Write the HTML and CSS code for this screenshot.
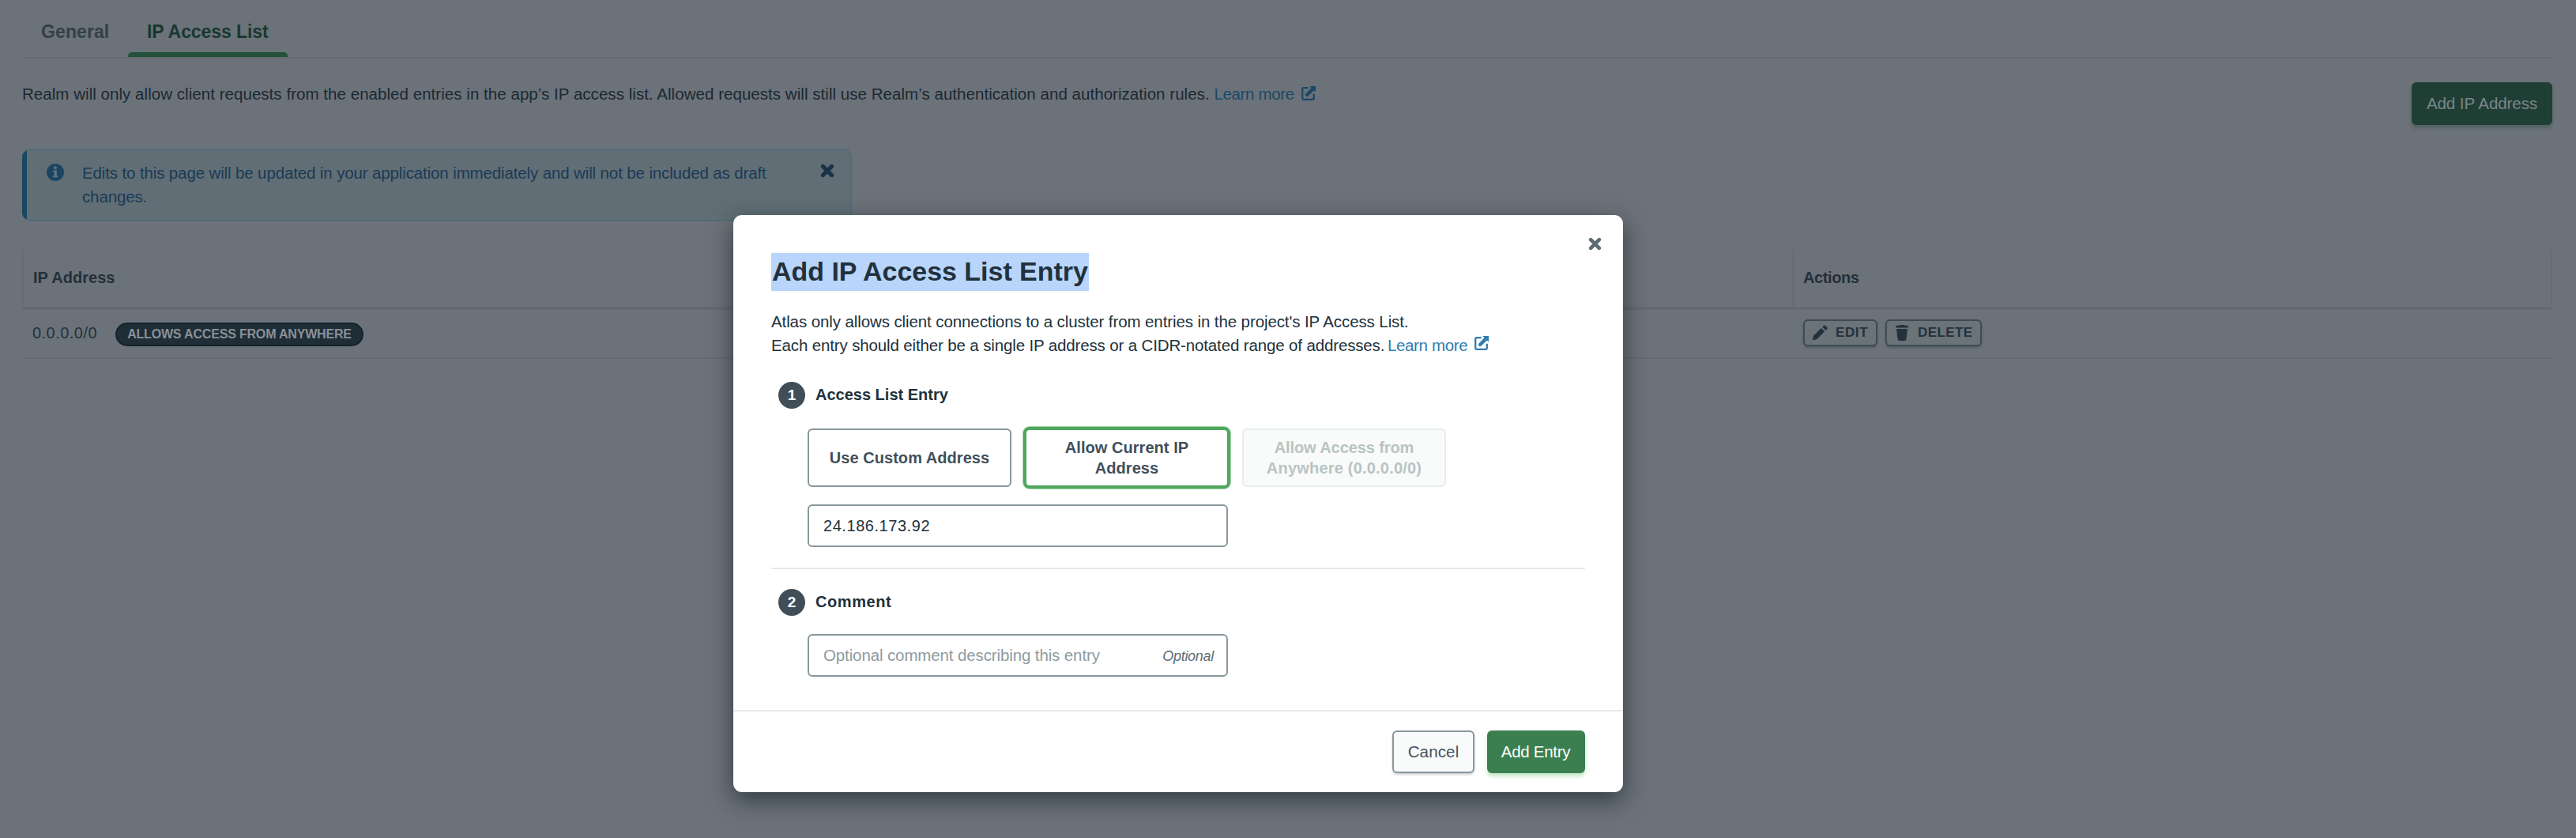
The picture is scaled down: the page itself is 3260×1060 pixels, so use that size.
FILE: index.html
```html
<!DOCTYPE html>
<html lang="en">
<head>
<meta charset="utf-8">
<title>IP Access List</title>
<link rel="stylesheet" href="styles.css">
</head>
<body>
<svg class="defs" width="0" height="0" aria-hidden="true">
  <symbol id="icon-external" viewBox="0 0 18 18">
    <path d="M8.500 2.200H2.700a1.500 1.500 0 0 0-1.500 1.500v11.600a1.500 1.500 0 0 0 1.500 1.500h11.600a1.500 1.500 0 0 0 1.500-1.500V9.800" fill="none" stroke="currentColor" stroke-width="2.300"/>
    <path d="M10.300 0H18v7.600l-2.200-2.100-7.300 7a2.100 2.100 0 0 1-3-3l7-7.300z" fill="currentColor"/>
  </symbol>
  <symbol id="icon-x" viewBox="0 0 16 16">
    <path d="M3 3l10 10M13 3L3 13" fill="none" stroke="currentColor" stroke-width="4.400" stroke-linecap="round"/>
  </symbol>
</svg>

<main class="page">
  <nav class="tabs">
    <a class="tab tab-general">General</a>
    <a class="tab tab-active">IP Access List</a>
  </nav>

  <section class="intro">
    <p class="intro-text"><span class="intro-copy">Realm will only allow client requests from the enabled entries in the app’s IP access list. Allowed requests will still use Realm’s authentication and authorization rules.</span><a class="link">Learn more<svg class="external"><use href="#icon-external"/></svg></a></p>
    <button class="add-address">Add IP Address</button>
  </section>

  <aside class="banner">
    <svg class="banner-icon" viewBox="0 0 22 22">
      <circle cx="11" cy="11" r="11" fill="#1b4662"/>
      <circle cx="11" cy="5.2" r="2" fill="#61727b"/>
      <path d="M8 8.6h4.8v6.6H14v2H8v-2h1.5v-4.6H8z" fill="#61727b"/>
    </svg>
    <p class="banner-text">Edits to this page will be updated in your application immediately and will not be included as draft<br>changes.</p>
    <svg class="banner-close"><use href="#icon-x"/></svg>
  </aside>

  <section class="table">
    <div class="table-head">
      <div class="th">IP Address</div>
      <div class="th th-actions">Actions</div>
    </div>
    <div class="table-row">
      <div class="td">
        <span class="cidr">0.0.0.0/0</span>
        <span class="badge">ALLOWS ACCESS FROM ANYWHERE</span>
      </div>
      <div class="td td-actions">
        <button class="mini edit">
          <svg class="mini-icon" viewBox="0 0 20 20"><path d="M.8 19.4l1.2-5.6L11.900 3.900l4.300 4.300L6.300 18.100zM13.200 2.600l1.700-1.700a1.500 1.500 0 0 1 2.100 0l2.200 2.200a1.500 1.500 0 0 1 0 2.100l-1.700 1.700z" fill="currentColor"/></svg>EDIT</button>
        <button class="mini delete">
          <svg class="mini-icon" viewBox="0 0 20 20"><path d="M6.500.8Q6.700 0 7.600 0h4.800q.9 0 1.100.8h2.900Q18 .8 18 2.400v1.200H2V2.400Q2 .8 3.600.8zM3 5h14l-1.500 12.700Q15.200 20 13.200 20H6.800Q4.800 20 4.500 17.700z" fill="currentColor"/></svg>DELETE</button>
      </div>
    </div>
  </section>
</main>

<div class="modal" role="dialog">
  <svg class="modal-close"><use href="#icon-x"/></svg>
  <div class="modal-body">
    <h1 class="modal-title"><span class="selected">Add IP Access List Entry</span></h1>
    <p class="modal-text"><span class="line-one">Atlas only allows client connections to a cluster from entries in the project's IP Access List.</span><span class="line-two">Each entry should either be a single IP address or a CIDR-notated range of addresses.</span><a class="link link-bright">Learn more<svg class="external"><use href="#icon-external"/></svg></a></p>

    <section class="step">
      <h2 class="step-head"><span class="step-number">1</span><span class="step-title">Access List Entry</span></h2>
      <div class="step-fields">
        <div class="options">
          <button class="option">Use Custom Address</button>
          <button class="option option-selected">Allow Current IP<br>Address</button>
          <button class="option option-disabled" disabled>Allow Access from<br><span class="anywhere">Anywhere (0.0.0.0/0)</span></button>
        </div>
        <div class="field address-field"><span class="value">24.186.173.92</span></div>
      </div>
    </section>

    <section class="step step-comment">
      <h2 class="step-head"><span class="step-number">2</span><span class="step-title comment-title">Comment</span></h2>
      <div class="step-fields">
        <div class="field comment-field"><span class="placeholder">Optional comment describing this entry</span><span class="optional">Optional</span></div>
      </div>
    </section>
  </div>
  <footer class="modal-footer">
    <button class="cancel">Cancel</button>
    <button class="submit">Add Entry</button>
  </footer>
</div>
</body>
</html>
```
FILE: styles.css
```css
* { box-sizing: border-box; }

html, body { height: 100%; overflow: hidden; }

body {
  margin: 0;
  background: #6c7279;
  color: #1a2933;
  font-family: "Liberation Sans", Arial, sans-serif;
  font-size: 20.5px;
  line-height: 30px;
}

h1, h2, p { margin: 0; }

button {
  display: flex;
  align-items: center;
  justify-content: center;
  padding: 0;
  font: inherit;
  white-space: nowrap;
}

svg { display: block; flex: none; }
.defs { position: absolute; }

.page { padding: 0 30px 0 28px; }

/* Tabs */
.tabs {
  display: flex;
  height: 74px;
  border-bottom: 2px solid #646a71;
  font-size: 23px;
  font-weight: bold;
}
.tab { height: 72px; padding-top: 25px; padding-left: 24px; color: #33404b; white-space: nowrap; }
.tab-general { width: 134px; letter-spacing: 0.1px; }
.tab-active {
  display: flex;
  flex-direction: column;
  justify-content: space-between;
  width: 202px;
  color: #18382f;
  letter-spacing: -0.08px;
}
.tab-active::after {
  content: "";
  height: 6px;
  margin-left: -24px;
  background: #245139;
  border-radius: 5px 5px 0 0;
}

/* Intro */
.intro { display: flex; justify-content: space-between; padding-top: 30px; }
.intro-text { display: flex; white-space: nowrap; }
.intro-copy { width: 1508.5px; letter-spacing: 0.045px; }
.link { display: flex; color: #1b4865; letter-spacing: -0.36px; }
.link-bright { color: #2f7dae; }
.external { width: 18px; height: 18px; margin: 5px 0 0 9px; }
.add-address {
  width: 178px;
  height: 54px;
  border: 0;
  border-radius: 6px;
  background: #1f3f35;
  color: #7c8589;
  letter-spacing: -0.05px;
  box-shadow: 0 4px 4px rgba(45, 82, 68, 0.45);
}

/* Info banner */
.banner {
  display: flex;
  width: 1050px;
  height: 92px;
  margin-top: 30px;
  border: 2px solid #566b79;
  border-left: 0;
  border-radius: 10px;
  background: linear-gradient(90deg, #1b4662 6px, #616e75 6px);
  color: #1a3a56;
  letter-spacing: -0.13px;
}
.banner-icon { width: 22px; height: 22px; margin: 17px 0 0 31px; }
.banner-text { flex: 1; padding: 14px 0 0 23px; white-space: nowrap; }
.banner-close { width: 18px; height: 18px; margin: 17px 20px 0 0; color: #183248; }

/* Table */
.table { margin-top: 36px; }
.table-head, .table-row { display: grid; grid-template-columns: 2240px 1fr; }
.table-head {
  height: 76px;
  border-bottom: 4px solid #646a71;
  border-right: 2px solid #666c73;
  color: #22303b;
  font-size: 20px;
  font-weight: bold;
  line-height: 70px;
}
.th { padding-left: 12px; border-left: 2px solid #666c73; }
.th-actions { letter-spacing: -0.4px; }
.table-row { height: 62px; margin-left: 2px; border-bottom: 2px solid #646a71; }
.td { display: flex; align-items: flex-start; }
.cidr { width: 116px; padding-left: 11px; font-size: 20px; line-height: 58px; letter-spacing: 0.47px; color: #23323d; }
.badge {
  width: 314px;
  height: 30px;
  margin-top: 16px;
  border: 2px solid #14222d;
  border-radius: 15px;
  background: #1f2d37;
  color: #8a9197;
  font-size: 16px;
  font-weight: bold;
  line-height: 26px;
  letter-spacing: -0.18px;
  text-align: center;
  white-space: nowrap;
}
.td-actions { gap: 10px; padding: 12px 0 0 12px; }
.mini {
  height: 34px;
  justify-content: flex-start;
  padding-left: 9px;
  border: 2px solid #3d4b55;
  border-radius: 6px;
  background: #6a7378;
  color: #23313c;
  font-size: 17px;
  font-weight: bold;
  box-shadow: 0 2px 3px rgba(30, 42, 52, 0.35);
}
.mini-icon { width: 20px; height: 20px; margin-right: 10px; }
.edit { width: 94px; letter-spacing: 0.6px; }
.delete { width: 122px; letter-spacing: 0.4px; }

/* Dialog */
.modal {
  position: absolute;
  left: 928px;
  top: 272px;
  width: 1126px;
  height: 730px;
  border-radius: 11px;
  background: #fff;
  color: #21313c;
  box-shadow: 0 10px 30px rgba(6, 22, 33, 0.6);
}
.modal-close { position: absolute; top: 28px; right: 27px; width: 17px; height: 17px; color: #5d6c74; }
.modal-body { height: 626px; padding: 48px 48px 0; }
.modal-title { height: 48px; font-size: 34px; line-height: 46px; letter-spacing: -0.03px; }
.selected { display: inline-block; width: 402px; height: 48px; padding-left: 1px; background: #b9d5fb; white-space: nowrap; }
.modal-text {
  display: grid;
  grid-template-columns: 780px auto;
  justify-content: start;
  height: 60px;
  margin-top: 24px;
  white-space: nowrap;
}
.line-one { grid-column: 1 / -1; letter-spacing: -0.1px; }
.line-two { letter-spacing: -0.14px; }
.modal-text .external { margin-top: 3px; }

.step { padding-top: 31px; }
.step-comment { margin-top: 26px; padding-top: 25px; border-top: 2px solid #e8eaea; }
.step-head { display: flex; height: 34px; padding-left: 9px; font-size: 20px; line-height: 32px; }
.step-number {
  width: 34px;
  height: 34px;
  margin-right: 13px;
  border-radius: 50%;
  background: #414e58;
  color: #fff;
  font-size: 19px;
  line-height: 33px;
  text-align: center;
}
.step-title { letter-spacing: 0; }
.comment-title { letter-spacing: 0.57px; }
.step-fields { padding-left: 46px; }

.options { display: grid; grid-template-columns: repeat(3, 258px); gap: 17px; margin-top: 25px; }
.option {
  display: block;
  height: 74px;
  padding-bottom: 1px;
  border: 2px solid #89979b;
  border-radius: 6px;
  background: #fff;
  color: #414f5a;
  font-size: 20px;
  font-weight: bold;
  line-height: 26px;
  letter-spacing: 0.05px;
}
.option-selected { border-color: #4fa75e; box-shadow: 0 0 0 2px #4fa75e, 0 0 0 3px #a8d3af; }
.option-disabled { border-color: #e7eeec; background: #f9fbfa; color: #b8c4c2; letter-spacing: -0.1px; }
.anywhere { letter-spacing: 0.2px; }

.field {
  display: flex;
  justify-content: space-between;
  width: 532px;
  height: 54px;
  padding: 0 16px 0 18px;
  border: 2px solid #89979b;
  border-radius: 6px;
  line-height: 50px;
}
.address-field { margin-top: 22px; }
.comment-field { margin-top: 23px; }
.value { font-size: 20px; letter-spacing: 0.55px; }
.placeholder { color: #8e9b9f; letter-spacing: -0.12px; }
.optional { color: #5d6c74; font-size: 18px; font-style: italic; letter-spacing: -0.29px; line-height: 52px; }

.modal-footer {
  display: flex;
  justify-content: flex-end;
  gap: 16px;
  height: 104px;
  padding: 24px 48px 0 0;
  border-top: 2px solid #e8eaea;
}
.cancel, .submit { height: 54px; border-radius: 6px; }
.cancel {
  width: 104px;
  border: 2px solid #89979b;
  background: #f9fbfa;
  color: #44515c;
  letter-spacing: 0.15px;
  box-shadow: 0 2px 3px rgba(6, 22, 33, 0.2);
}
.submit {
  width: 124px;
  padding-right: 1px;
  border: 0;
  background: #3b7f51;
  color: #fff;
  letter-spacing: -0.3px;
  box-shadow: 0 4px 5px #c3e7ca;
}
```
